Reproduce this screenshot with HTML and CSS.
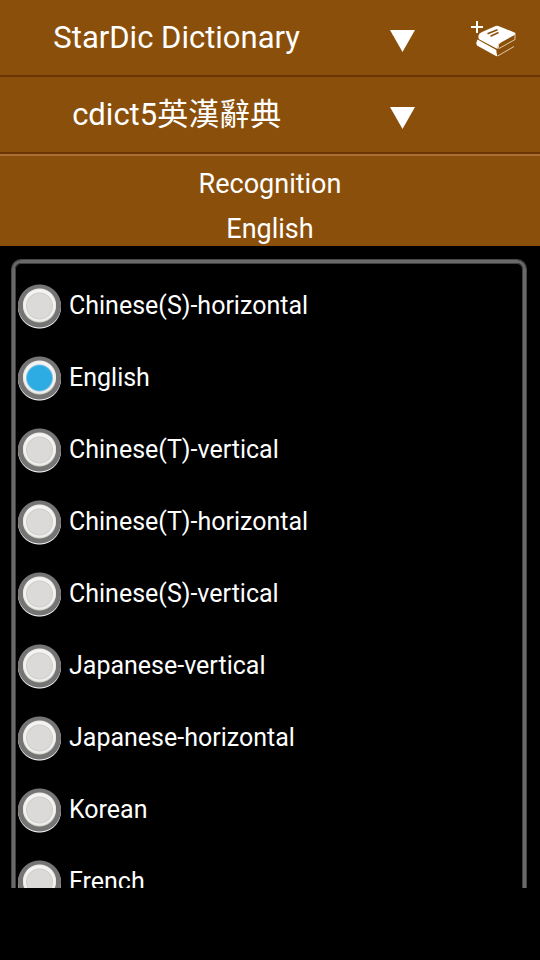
FILE: index.html
```html
<!DOCTYPE html>
<html lang="en">
<head>
<meta charset="utf-8">
<meta name="viewport" content="width=device-width, initial-scale=1">
<title>StarDic Dictionary</title>
<link rel="stylesheet" href="styles.css">
</head>
<body>
<header class="header">
  <div class="picker">
    <select class="picker-select" aria-label="Dictionary type">
      <option>StarDic Dictionary</option>
    </select>
    <svg class="picker-arrow" viewBox="0 0 25 22" aria-hidden="true"><path d="M0 0h25L12.500 22z"/></svg>
    <button class="add-button" type="button" aria-label="Add dictionary">
      <svg class="add-icon" viewBox="0 0 46 36" aria-hidden="true">
        <path class="solid" d="M5 0h2v5H12v2H7v5H5v-5H0V5h5z"/>
        <path class="solid" d="M7.500 14.500Q8 12 11 11L24 5.200Q26 4.500 28 5.200L43.500 11.500Q45.500 12.500 43.500 14L30 21.500Q26.500 23.500 26.500 28L8.500 18.500Q7 17.500 7.500 14.500z"/>
        <path class="solid" d="M6.500 18.500L24.500 28.500Q26 29.500 25.500 31.500L26.500 35.500L24 34.500L6 24.500Q4.500 21.500 6.500 18.500z"/>
        <path class="pages" d="M28 27.500L44 18.500M27 34.800L43 25.500M44 13.500v5M27.500 22.500v5"/>
        <path class="mark" d="M16.500 12.700L26.500 8.700M19.500 15.200L27.500 11.500"/>
      </svg>
    </button>
  </div>
  <div class="picker">
    <select class="picker-select" aria-label="Dictionary">
      <option>cdict5英漢辭典</option>
    </select>
    <svg class="picker-arrow" viewBox="0 0 25 22" aria-hidden="true"><path d="M0 0h25L12.500 22z"/></svg>
  </div>
  <div class="recognition">
    <div id="recognition-label">Recognition</div>
    <div>English</div>
  </div>
</header>
<main class="scroller">
  <div class="frame" role="radiogroup" aria-labelledby="recognition-label">
    <label class="option"><input class="radio" type="radio" name="language">Chinese(S)-horizontal</label>
    <label class="option"><input class="radio" type="radio" name="language" checked>English</label>
    <label class="option"><input class="radio" type="radio" name="language">Chinese(T)-vertical</label>
    <label class="option"><input class="radio" type="radio" name="language">Chinese(T)-horizontal</label>
    <label class="option"><input class="radio" type="radio" name="language">Chinese(S)-vertical</label>
    <label class="option"><input class="radio" type="radio" name="language">Japanese-vertical</label>
    <label class="option"><input class="radio" type="radio" name="language">Japanese-horizontal</label>
    <label class="option"><input class="radio" type="radio" name="language">Korean</label>
    <label class="option"><input class="radio" type="radio" name="language">French</label>
  </div>
</main>
</body>
</html>
```
FILE: styles.css
```css
* {
  box-sizing: border-box;
}

body {
  display: flex;
  flex-direction: column;
  height: 100vh;
  margin: 0;
  padding-bottom: 72px;
  background: #000;
  color: #fff;
  font-family: Roboto, "Noto Sans CJK TC", sans-serif;
}

.header {
  background: #8a500b;
}

.picker {
  display: grid;
  grid-template-columns: 352fr 101fr 87fr;
  grid-template-rows: 75px;
  align-items: center;
  justify-items: center;
  border-bottom: 2px solid #6b3504;
}

.picker-select {
  grid-area: 1 / 1 / 2 / 3;
  appearance: none;
  width: 100%;
  height: 100%;
  margin: 0;
  padding: 0 22% 0 0;
  border: 0;
  background: none;
  color: inherit;
  font: inherit;
  font-size: 31px;
  text-align: center;
  text-align-last: center;
}

.picker-select option {
  color: #000;
}

.picker-arrow {
  grid-area: 1 / 2;
  width: 25px;
  height: 22px;
  margin-top: 6px;
  fill: #fff;
  pointer-events: none;
}

.add-button {
  grid-area: 1 / 3;
  display: flex;
  align-items: center;
  justify-content: center;
  width: 100%;
  height: 100%;
  padding: 2px 5px 0 0;
  border: 0;
  background: none;
}

.add-icon {
  width: 46px;
  height: 36px;
}

.add-icon .solid {
  fill: #fff;
}

.add-icon .pages {
  fill: none;
  stroke: #e3cba9;
  stroke-width: 1;
}

.add-icon .mark {
  fill: none;
  stroke: #8a500b;
  stroke-width: 1.5;
}

.recognition {
  display: grid;
  gap: 13px;
  padding: 12px 0 1px;
  border-top: 2px solid #ab7034;
  font-size: 27px;
  line-height: 32px;
  text-align: center;
}

.scroller {
  flex: 1;
  min-height: 0;
  padding: 14px 14px 0 12px;
  overflow-y: auto;
  scrollbar-width: none;
}

.frame {
  padding: 7px 0 14px 3px;
  border: 3px solid #696969;
  border-radius: 9px;
  box-shadow: 0 0 0 1px #484848, inset 0 0 0 1px #404040;
}

.option {
  display: flex;
  align-items: center;
  gap: 8px;
  height: 72px;
  font-size: 25px;
  line-height: 30px;
}

.radio {
  appearance: none;
  flex: none;
  width: 43px;
  height: 45px;
  margin: 0;
  --face: #dcdad8;
  --rim: #cfcdca;
  background:
    radial-gradient(circle at 50% 22px, var(--face) 12px, var(--rim) 13px, transparent 14px),
    radial-gradient(circle at 50% 21px, #f4f3f1 15px, #eceae7 16px, transparent 17px),
    radial-gradient(circle at 50% 22px, #d2d0cd 16px, transparent 17px),
    radial-gradient(circle at 50% 22px, #757575 21px, transparent 22px),
    radial-gradient(circle at 50% 23px, #fff 21px, transparent 22px);
}

.radio:checked {
  --face: #2cace2;
  --rim: #7cc4e4;
}
```
